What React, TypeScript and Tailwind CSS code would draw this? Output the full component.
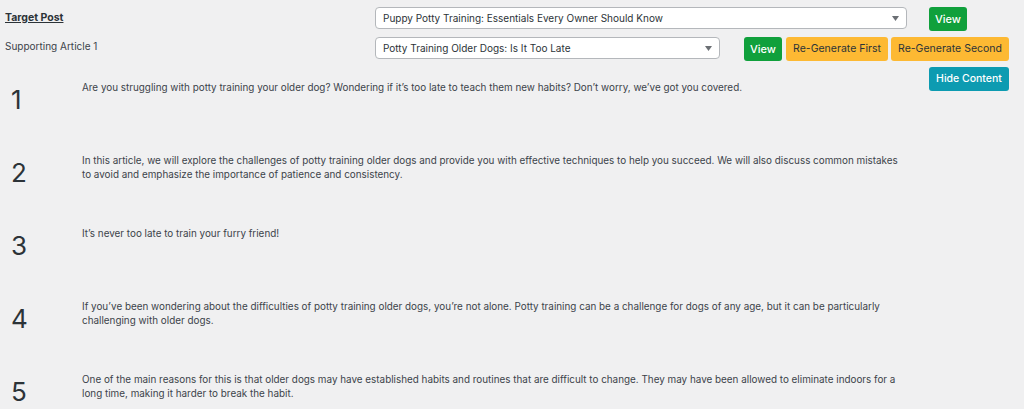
import React from "react";

const paras: string[][] = [
  ["Are you struggling with potty training your older dog? Wondering if it’s too late to teach them new habits? Don’t worry, we’ve got you covered."],
  [
    "In this article, we will explore the challenges of potty training older dogs and provide you with effective techniques to help you succeed. We will also discuss common mistakes",
    "to avoid and emphasize the importance of patience and consistency.",
  ],
  ["It’s never too late to train your furry friend!"],
  [
    "If you’ve been wondering about the difficulties of potty training older dogs, you’re not alone. Potty training can be a challenge for dogs of any age, but it can be particularly",
    "challenging with older dogs.",
  ],
  [
    "One of the main reasons for this is that older dogs may have established habits and routines that are difficult to change. They may have been allowed to eliminate indoors for a",
    "long time, making it harder to break the habit.",
  ],
];

function Select({ text, width }: { text: string; width: string }) {
  return (
    <div
      className={`${width} h-[22px] bg-white border border-[#b4b7bb] rounded-[4px] flex items-center justify-between pl-[7px] pr-[7px] text-[10px] text-[#2c3338]`}
    >
      <span>{text}</span>
      <svg width="7" height="5" viewBox="0 0 7 5">
        <path d="M0 0 L7 0 L3.5 5 Z" fill="#6b6f74" />
      </svg>
    </div>
  );
}

export default function App() {
  return (
    <div
      className="w-[1024px] h-[409px] overflow-hidden bg-[#f0f0f1] text-[#3c434a]"
      style={{ fontFamily: "Inter, 'Noto Sans', sans-serif" }}
    >
      <div className="flex items-start pt-[7px]">
        <div className="w-[375px] pl-[5px] pt-[3px] text-[10.5px] font-bold underline text-[#2c3338]">
          Target Post
        </div>
        <Select text="Puppy Potty Training: Essentials Every Owner Should Know" width="w-[532px]" />
        <button className="ml-[22px] h-[24px] w-[38px] rounded-[3px] bg-[#10a03c] text-white text-[11px] font-medium">
          View
        </button>
      </div>
      <div className="flex items-start pt-[6px]">
        <div className="w-[375px] pl-[5px] pt-[2px] text-[10px] text-[#3c434a]">Supporting Article 1</div>
        <Select text="Potty Training Older Dogs: Is It Too Late" width="w-[345px]" />
        <button className="ml-[24px] h-[24px] w-[38px] rounded-[3px] bg-[#10a03c] text-white text-[11px] font-medium">
          View
        </button>
        <button className="ml-[4px] h-[24px] w-[102px] rounded-[3px] bg-[#fdb933] text-[#2c3338] text-[10.5px]">
          Re-Generate First
        </button>
        <button className="ml-[3px] h-[24px] w-[118px] rounded-[3px] bg-[#fdb933] text-[#2c3338] text-[10.5px]">
          Re-Generate Second
        </button>
      </div>
      <div className="flex justify-end pr-[15px] pt-[6px]">
        <button className="h-[24px] w-[80px] rounded-[3px] bg-[#0d9bb1] text-white text-[10.5px] font-medium">
          Hide Content
        </button>
      </div>
      <div className="-mt-[11px]">
        {paras.map((lines, i) => (
          <div key={i} className="flex h-[73px]">
            <div className="w-[82px] pl-[11px] pt-[5px] text-[26px] leading-[30px] text-[#2c3338]">{i + 1}</div>
            <div className="text-[9.9px] leading-[14px] text-[#3c434a]">
              {lines.map((l, j) => (
                <div key={j}>{l}</div>
              ))}
            </div>
          </div>
        ))}
      </div>
    </div>
  );
}
